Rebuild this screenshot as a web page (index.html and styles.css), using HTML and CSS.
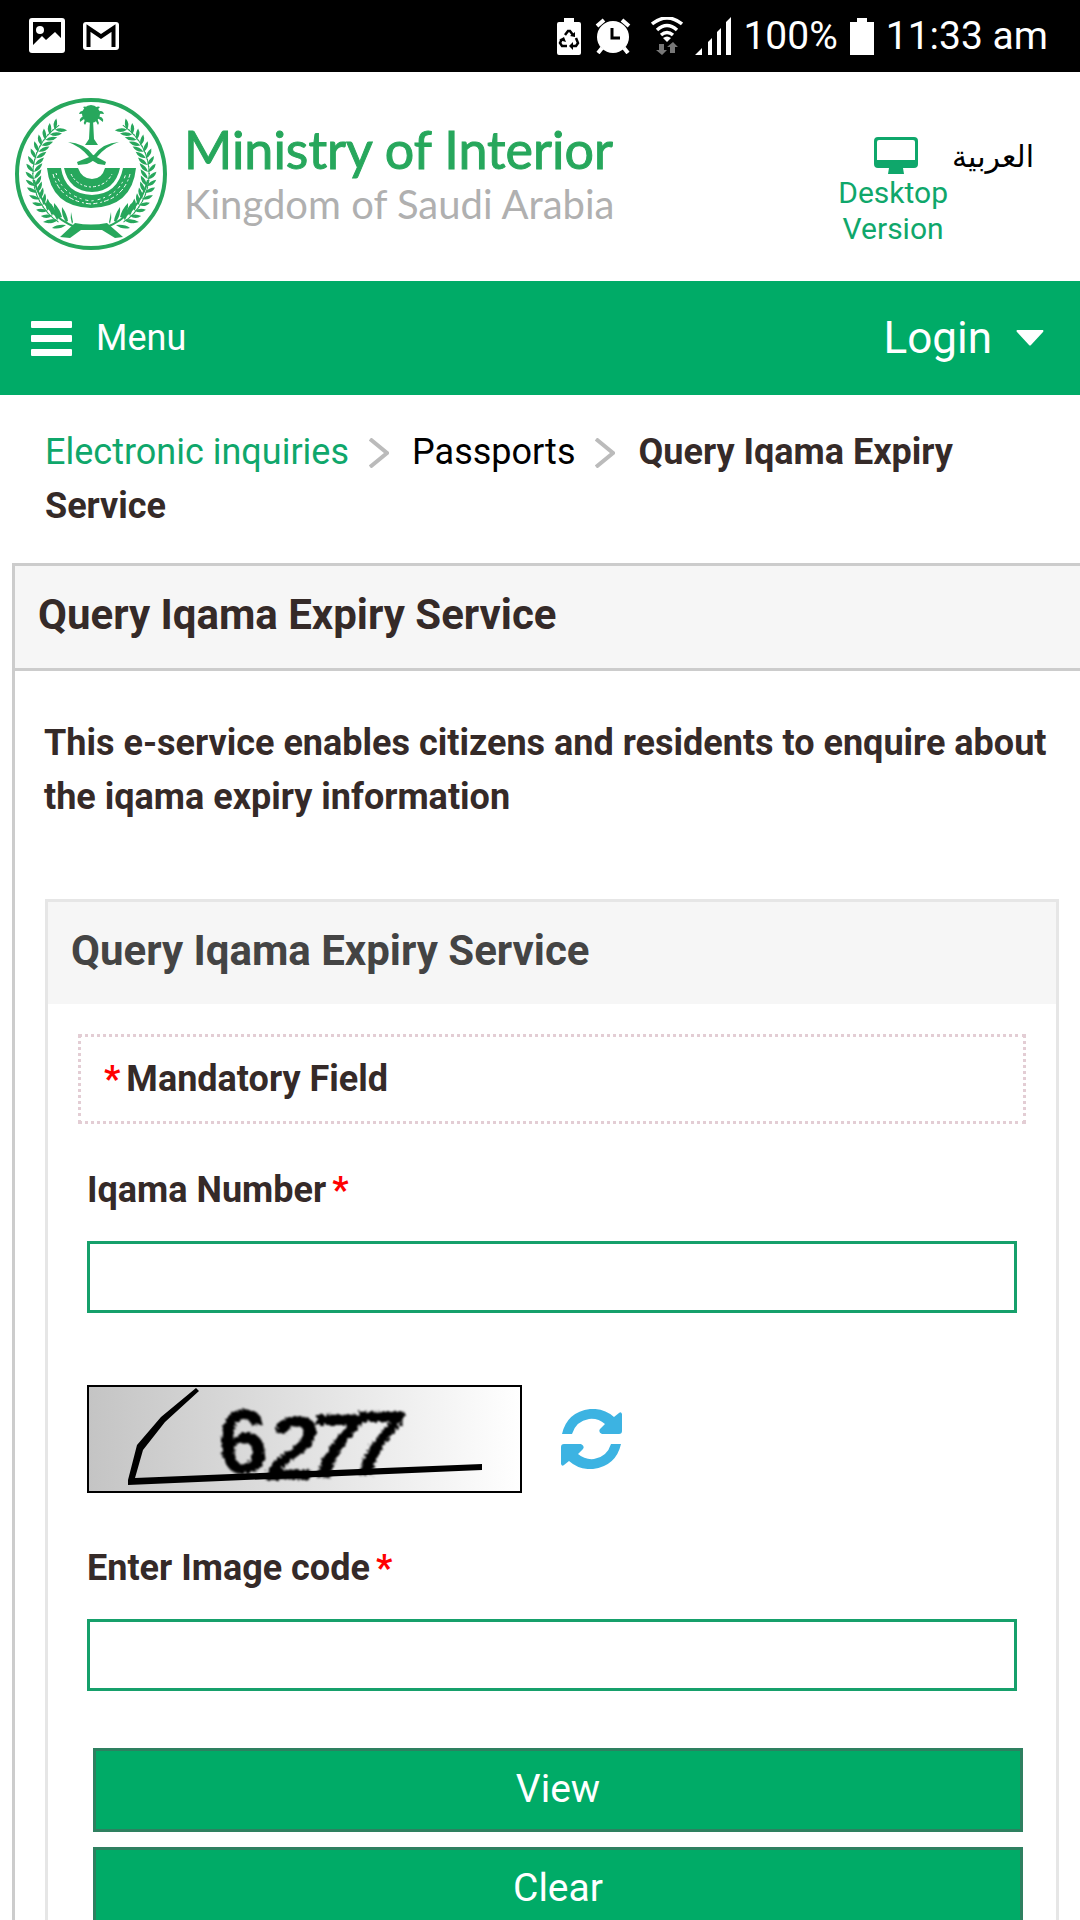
FILE: index.html
```html
<!DOCTYPE html>
<html lang="en">
<head>
    <meta charset="UTF-8">
    <meta name="viewport" content="width=device-width, initial-scale=1.0">
    <title>Query Iqama Expiry Service</title>
    <link rel="stylesheet" href="styles.css">
</head>
<body>
    <div class="status-bar">
        <div class="status-left">
            <svg width="36" height="36" viewBox="0 0 36 36">
                <rect width="36" height="35" rx="3" fill="#fff"/>
                <path d="M4 4h28v16l-6-6-9 8-4-4-9 9z" fill="#000"/>
                <circle cx="11" cy="12" r="4" fill="#fff"/>
            </svg>
            <svg width="36" height="28" viewBox="0 0 36 28">
                <rect width="36" height="28" rx="3" fill="#fff"/>
                <path d="M5.500 25V6L18 14.500 30.500 6v19" fill="none" stroke="#000" stroke-width="4"/>
            </svg>
        </div>
        <div class="status-right">
            <svg width="24" height="37" viewBox="0 0 24 37">
                <path d="M7 0h10v4h5q2 0 2 2v29q0 2-2 2H2q-2 0-2-2V6q0-2 2-2h5z" fill="#fff"/>
                <path d="M8 17l3-4h2l3 4M19 20l2 5-2 3h-4M10 28H5l-2-3 2-4" fill="none" stroke="#000" stroke-width="2.500"/>
                <path d="M13 18l5 1 0-5zM16 24v8l-4-4zM2 22l5-3 2 5z" fill="#000"/>
            </svg>
            <svg class="alarm" width="36" height="36" viewBox="0 0 36 36">
                <circle cx="18" cy="19" r="16" fill="#fff"/>
                <path d="M2 8l7-6M34 8l-7-6" stroke="#fff" stroke-width="4"/>
                <path d="M7 30l-4 5M29 30l4 5" stroke="#fff" stroke-width="4"/>
                <path d="M17 10v10h8" fill="none" stroke="#000" stroke-width="3"/>
            </svg>
            <svg class="wifi" width="32" height="38" viewBox="0 0 32 38">
                <path d="M1 7q15-12 30 0M6 13q10-9 20 0M10 18q6-5 12 0" fill="none" stroke="#fff" stroke-width="3.500"/>
                <path d="M12 21q4-3 8 0l-4 4z" fill="#fff"/>
                <path d="M8 27h5v6h3l-5 5-6-5h3zM19 36v-6h-3l6-5 5 5h-3v6z" fill="#777"/>
            </svg>
            <svg width="36" height="38" viewBox="0 0 36 38">
                <path d="M0 38l7-7v7zM13 38V25l4-4v17zM22 38V15l4-4v27zM31 38V5l5-5v38z" fill="#fff"/>
            </svg>
            <span class="battery-text">100%</span>
            <svg width="24" height="37" viewBox="0 0 24 37">
                <path d="M7 0h10v4h7v33H0V4h7z" fill="#fff"/>
            </svg>
            <span class="clock">11:33 am</span>
        </div>
    </div>

    <header class="header">
        <a class="brand" href="#">
            <svg class="emblem" width="153" height="153" viewBox="0 0 153 153">
                <defs>
                    <g id="leaf">
                        <path d="M19 76q-7-1-8-8q6 2 8 8zM19 76q1-6 8-9q-1 7-8 9z"/>
                        <path d="M18 78v-8" stroke="#27a75c" stroke-width="1"/>
                    </g>
                    <g id="wreath">
                        <use href="#leaf" transform="rotate(-54 76 76)"/>
                        <use href="#leaf" transform="rotate(-47 76 76)"/>
                        <use href="#leaf" transform="rotate(-40 76 76)"/>
                        <use href="#leaf" transform="rotate(-33 76 76)"/>
                        <use href="#leaf" transform="rotate(-26 76 76)"/>
                        <use href="#leaf" transform="rotate(-19 76 76)"/>
                        <use href="#leaf" transform="rotate(-12 76 76)"/>
                        <use href="#leaf" transform="rotate(-5 76 76)"/>
                        <use href="#leaf" transform="rotate(2 76 76)"/>
                        <use href="#leaf" transform="rotate(9 76 76)"/>
                        <use href="#leaf" transform="rotate(16 76 76)"/>
                        <use href="#leaf" transform="rotate(23 76 76)"/>
                        <use href="#leaf" transform="rotate(30 76 76)"/>
                        <use href="#leaf" transform="rotate(37 76 76)"/>
                        <use href="#leaf" transform="rotate(44 76 76)"/>
                        <use href="#leaf" transform="rotate(51 76 76)"/>
                        <path d="M62 130Q28 116 19 82" fill="none" stroke="#27a75c" stroke-width="2"/>
                        <path d="M57 126q-2-6-1-12l2 10zM51 124q-5-7-4-15q5 7 6 14zM44 120q-6-7-5-15q6 6 8 14z"/>
                        <path d="M38 116q-6-7-5-13q6 5 8 12zM51 127q-9-1-14 3q8 2 14-3zM43 122q-9-2-15 2q8 3 15-2z"/>
                    </g>
                </defs>
                <circle cx="76" cy="76" r="74" fill="none" stroke="#27a75c" stroke-width="4"/>
                <g fill="#27a75c">
                    <use href="#wreath"/>
                    <use href="#wreath" transform="translate(152 0) scale(-1 1)"/>
                    <!-- palm -->
                    <path d="M75 22h3l1 19 4 6H70l4-6z"/>
                    <path d="M76 18q-3-12-8-9q3 3 8 9zM76 18q-10-9-12-2q6-1 12 2zM76 18q-13-1-11 6q5-4 11-6zM76 18q-10 4-6 9q2-5 6-9zM77 18q3-12 8-9q-3 3-8 9zM77 18q10-9 12-2q-6-1-12 2zM77 18q13-1 11 6q-5-4-11-6zM77 18q9 4 6 9q-2-5-6-9z"/>
                    <circle cx="76" cy="16" r="9"/>
                    <!-- swords -->
                    <path d="M53 44q16 1 25 13l13 7-1 3-7-1q-6-3-9-7-9-11-21-15z"/>
                    <path d="M104 44q-16 1-25 13l-17 7 1 3 9-1q7-3 10-7 9-11 22-15z"/>
                    <path d="M32 70h14q4 26 31 27 26-1 31-27h13q-4 39-45 40-40-1-44-40z"/>
                    <path d="M49 70h14q4 11 14 11 10 0 13-11h15q-5 23-28 24-23-1-28-24z"/>
                    <path d="M45 139l15-14q16 3 32 0l16 14-8 1-13-8H66l-11 8z"/>
                </g>
                <g fill="none" stroke="#fff" stroke-width="1">
                    <path d="M38 76q7 27 38 30 32-3 39-30" stroke-dasharray="4 3 2 2 5 2"/>
                    <path d="M41 75q7 24 35 28 29-4 35-28" stroke-dasharray="2 4 3 3"/>
                    <path d="M56 76q6 12 20 13 15-1 21-13" stroke-dasharray="3 2 2 2"/>
                </g>
            </svg>
            <span class="brand-text">
                <span class="brand-name">Ministry of Interior</span>
                <span class="brand-country">Kingdom of Saudi Arabia</span>
            </span>
        </a>
        <div class="header-links">
            <a class="desktop-link" href="#">
                <svg class="monitor" width="44" height="38" viewBox="0 0 44 38">
                    <path d="M4 0h36q4 0 4 4v23q0 4-4 4H29l1 6H14l1-6H4q-4 0-4-4V4q0-4 4-4zM5 3Q3 3 3 5v18h38V5q0-2-2-2z" fill="#0fa76b" fill-rule="evenodd"/>
                </svg>
                <span>Desktop<br>Version</span>
            </a>
            <a class="lang-link" href="#" lang="ar">العربية</a>
        </div>
    </header>

    <nav class="nav">
        <button class="menu-button">
            <svg width="41" height="35" viewBox="0 0 41 35" fill="#fff">
                <rect width="41" height="7" rx="1"/>
                <rect y="14" width="41" height="7" rx="1"/>
                <rect y="28" width="41" height="7" rx="1"/>
            </svg>
            Menu
        </button>
        <button class="login-button">
            Login
            <svg width="28" height="16" viewBox="0 0 28 16"><path d="M1 0h26q1 1 0 2L15 15q-1 1-2 0L1 2q-1-1 0-2z" fill="#fff"/></svg>
        </button>
    </nav>

    <div class="breadcrumb">
        <a href="#">Electronic inquiries</a><svg class="chevron" width="20" height="30" viewBox="0 0 20 30"><path d="M1 1l17 14L1 29" fill="none" stroke="#bbb" stroke-width="4"/></svg><span class="crumb">Passports</span><svg class="chevron" width="20" height="30" viewBox="0 0 20 30"><path d="M1 1l17 14L1 29" fill="none" stroke="#bbb" stroke-width="4"/></svg><strong>Query Iqama Expiry Service</strong>
    </div>

    <main class="panel">
        <h1 class="panel-title">Query Iqama Expiry Service</h1>
        <p class="intro">This e-service enables citizens and residents to enquire about the iqama expiry information</p>

        <form class="form-box">
            <h2 class="form-title">Query Iqama Expiry Service</h2>
            <div class="mandatory"><span class="required">*</span>Mandatory Field</div>

            <div class="fields">
                <label for="iqama">Iqama Number<span class="required">*</span></label>
                <input type="text" id="iqama">

                <div class="captcha-row">
                    <svg class="captcha" width="435" height="108" viewBox="0 0 435 108">
                        <defs>
                            <linearGradient id="captcha-bg">
                                <stop offset="0" stop-color="#c4c4c4"/>
                                <stop offset="1" stop-color="#fff"/>
                            </linearGradient>
                            <filter id="rough">
                                <feTurbulence type="fractalNoise" baseFrequency="0.3" numOctaves="2" seed="4"/>
                                <feDisplacementMap in="SourceGraphic" scale="6"/>
                                <feGaussianBlur stdDeviation="1"/>
                            </filter>
                        </defs>
                        <rect x="1" y="1" width="433" height="106" fill="url(#captcha-bg)" stroke="#000" stroke-width="2"/>
                        <g class="captcha-code" filter="url(#rough)">
                            <text x="131" y="88">6</text>
                            <text x="180" y="95" font-style="italic">2</text>
                            <text x="222" y="92" font-style="italic">7</text>
                            <text x="264" y="89" font-style="italic">7</text>
                        </g>
                        <path d="M109 3l3 3-34 31-22 28-8 28 347-14v6L41 100v-5l9-35 24-28z"/>
                    </svg>
                    <button type="button" class="refresh" aria-label="Refresh image">
                        <svg width="61" height="60" viewBox="0 0 61 60" fill="#3cb3e2">
                            <path d="M1 25Q6 3 29 0q14-1 24 8l5-4q2-2 3 1v17q0 3-3 3H41q-4-2-2-5l5-5q-7-6-16-5-13 2-17 15z"/>
                            <path d="M60 35Q55 57 32 60q-14 1-24-8l-5 4q-2 2-3-1V38q0-3 3-3h17q4 2 2 5l-5 5q7 6 16 5 13-2 17-15z"/>
                        </svg>
                    </button>
                </div>

                <label for="code">Enter Image code<span class="required">*</span></label>
                <input type="text" id="code">
            </div>

            <div class="actions">
                <button type="submit">View</button>
                <button type="reset">Clear</button>
            </div>
        </form>
    </main>
</body>
</html>
```
FILE: styles.css
```css
* {
    box-sizing: border-box;
}
body {
    margin: 0;
    font-family: Roboto, sans-serif;
    font-size: 36px;
    line-height: 54px;
    color: #352a28;
    background-color: #fff;
    overflow-x: hidden;
}
svg {
    display: block;
    flex-shrink: 0;
}
a {
    color: #0fa76b;
    text-decoration: none;
}
button {
    font-family: inherit;
    color: #fff;
    cursor: pointer;
}

/* status bar */
.status-bar {
    display: flex;
    justify-content: space-between;
    align-items: center;
    height: 72px;
    padding: 0 32px 0 29px;
    background-color: #000;
    color: #fff;
    font-size: 39px;
}
.status-left {
    display: flex;
    align-items: center;
    gap: 18px;
}
.status-right {
    display: flex;
    align-items: center;
    gap: 12px;
}
.alarm {
    margin-left: 2px;
}
.wifi {
    margin-left: 8px;
}

/* header */
.header {
    display: flex;
    justify-content: space-between;
    padding: 26px 46px 30px 15px;
}
.brand {
    display: flex;
    gap: 16px;
}
.brand-text {
    display: flex;
    flex-direction: column;
    padding-top: 20px;
    font-family: Lato, "Open Sans", sans-serif;
}
.brand-name {
    font-size: 52px;
    line-height: 62px;
    color: #27a75c;
    -webkit-text-stroke: 1px #27a75c;
}
.brand-country {
    font-size: 40px;
    line-height: 48px;
    color: #b0b0b0;
}
.header-links {
    display: flex;
    gap: 4px;
    padding-top: 39px;
}
.desktop-link {
    display: flex;
    flex-direction: column;
    align-items: center;
    text-align: center;
    font-size: 30px;
    line-height: 36px;
}
.monitor {
    margin-left: 6px;
}
.lang-link {
    color: #000;
    font-family: "DejaVu Sans", sans-serif;
    font-size: 30px;
    line-height: 40px;
}

/* nav */
.nav {
    display: flex;
    justify-content: space-between;
    align-items: center;
    height: 114px;
    padding: 0 36px 0 31px;
    background-color: #00ab67;
}
.menu-button,
.login-button {
    display: flex;
    align-items: center;
    gap: 24px;
    padding: 0;
    border: none;
    background: none;
    font-size: 36px;
}
.login-button {
    font-size: 44px;
}

/* breadcrumb */
.breadcrumb {
    padding: 30px 45px;
}
.chevron {
    display: inline-block;
    vertical-align: -4px;
    margin: 0 23px 0 20px;
}
.crumb {
    color: #000;
}

/* main panel */
.panel {
    margin-left: 12px;
    border-top: 3px solid #ccc;
    border-left: 3px solid #ccc;
}
.panel-title,
.form-title {
    margin: 0;
    padding: 17px 23px 22px;
    font-size: 42px;
    line-height: 63px;
    background-color: #f6f6f6;
}
.panel-title {
    border-bottom: 3px solid #ccc;
}
.form-title {
    color: #444;
}
.intro {
    margin: 0;
    padding: 45px 24px 75px 29px;
    font-weight: bold;
}
.form-box {
    margin: 0 21px 0 30px;
    padding-bottom: 60px;
    border: 3px solid #e6e6e6;
}
.mandatory {
    margin: 30px 30px 0;
    padding: 15px 23px;
    border: 3px dotted #e3cdd4;
    font-weight: bold;
}
.required {
    margin-left: 6px;
    color: #f00;
}
.mandatory .required {
    margin: 0 6px 0 0;
}
.fields {
    padding: 39px 39px 0;
}
.fields label {
    display: block;
    margin-bottom: 24px;
    font-weight: bold;
}
.fields input {
    display: block;
    width: 100%;
    height: 72px;
    padding: 0 15px;
    border: 3px solid #16a06b;
    border-radius: 0;
    background-color: #fff;
    font: inherit;
}
.captcha-row {
    display: flex;
    align-items: center;
    gap: 39px;
    margin: 72px 0 48px;
}
.captcha {
    overflow: visible;
}
.captcha-code {
    font-family: "Liberation Sans", sans-serif;
    font-size: 90px;
    font-weight: bold;
}
.refresh {
    padding: 0;
    border: none;
    background: none;
}
.actions {
    display: flex;
    flex-direction: column;
    gap: 15px;
    padding: 57px 33px 0 45px;
}
.actions button {
    height: 84px;
    padding: 0 6px 3px;
    border: 3px solid #2e8060;
    background-color: #00ab67;
    font-size: 39px;
}
```
